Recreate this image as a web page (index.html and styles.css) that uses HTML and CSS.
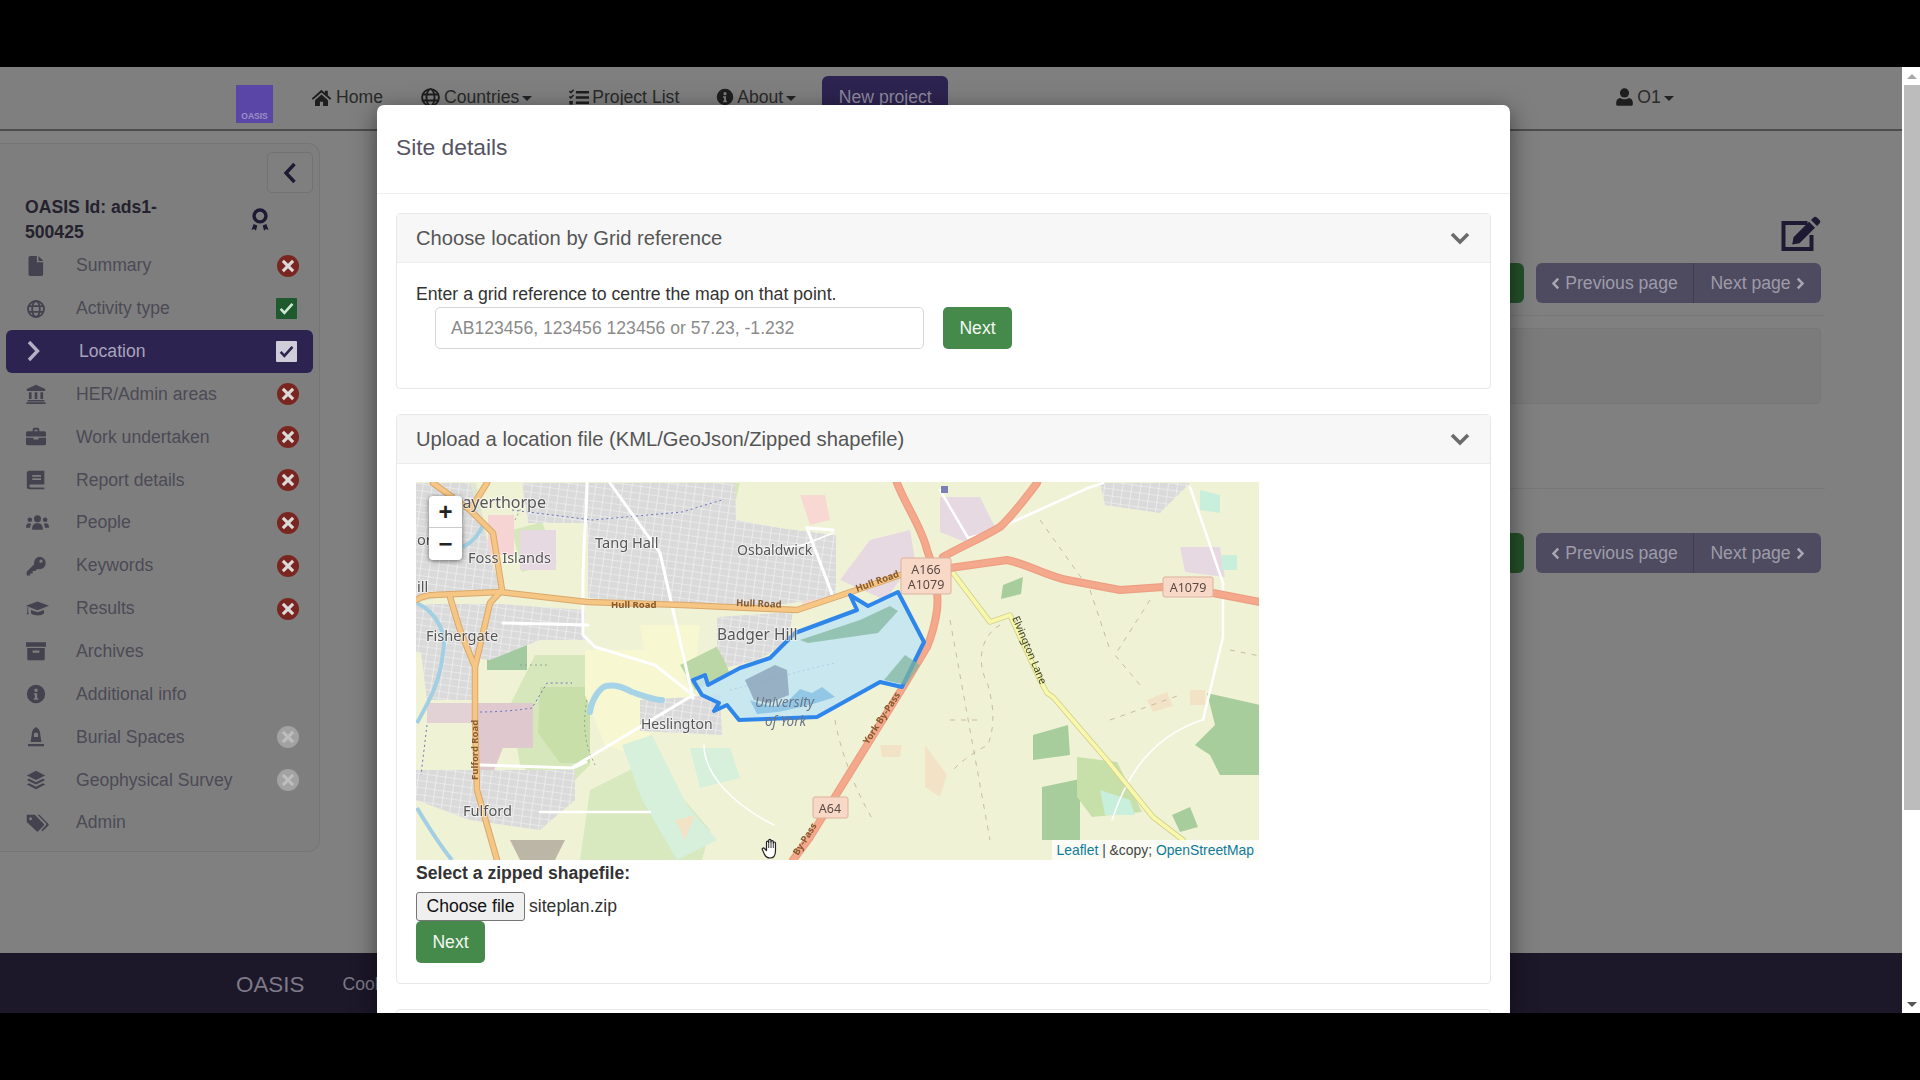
FILE: index.html
```html
<!DOCTYPE html>
<html lang="en">
<head>
<meta charset="utf-8">
<title>OASIS - Site details</title>
<link rel="stylesheet" href="styles.css">
</head>
<body>
<svg class="sprite" aria-hidden="true">
  <defs>
    <symbol id="i-home" viewBox="0 0 24 24"><path d="M12 3.2 .8 13l1.4 1.7L12 6.2l9.8 8.5 1.4-1.7-4-3.5V4.2h-3.4v2.6zM4.6 15v6.8h5.6v-5h3.6v5h5.6V15L12 8.6z"/></symbol>
    <symbol id="i-globe" viewBox="0 0 24 24"><g fill="none" stroke="currentColor" stroke-width="2.2"><circle cx="12" cy="12" r="9.6"/><ellipse cx="12" cy="12" rx="4.6" ry="9.6"/><path d="M2.4 8.6h19.2M2.4 15.4h19.2"/></g></symbol>
    <symbol id="i-list" viewBox="0 0 24 24"><path d="M9 4.5h15v3H9zM9 10.5h15v3H9zM9 16.5h15v3H9zM1 5.5 2.4 4 3.4 5 5.8 2.600 7 3.800 3.400 7.600zM1 11.500l1.400-1.500 1 1 2.400-2.400L7 9.800l-3.600 3.800zM1.500 16h4v4h-4z"/></symbol>
    <symbol id="i-info" viewBox="0 0 24 24"><path fill-rule="evenodd" d="M12 1a11 11 0 1 0 0 22 11 11 0 0 0 0-22zm0 4.400a2.100 2.100 0 1 1 0 4.200 2.100 2.100 0 0 1 0-4.200zM9.400 11h4v6h1.300v2H9.400v-2h1.300v-4H9.400z"/></symbol>
    <symbol id="i-user" viewBox="0 0 24 24"><circle cx="12" cy="6.800" r="5.800"/><path d="M6.500 13.200c1.500 1 3.500 1.600 5.500 1.600s4-.6 5.500-1.600c3 .4 5 2.800 5 6v1.800a2 2 0 0 1-2 2h-17a2 2 0 0 1-2-2v-1.800c0-3.200 2-5.600 5-6z"/></symbol>
    <symbol id="i-file" viewBox="0 0 18 24"><path d="M2 0h8v7.500h7.500V22a2 2 0 0 1-2 2H2a2 2 0 0 1-2-2V2a2 2 0 0 1 2-2zM12 0l6 6h-6z"/></symbol>
    <symbol id="i-bank" viewBox="0 0 24 24"><path d="M12 1 1 6v2.400h22V6zM3.500 10h3.200v8H3.500zM10.400 10h3.200v8h-3.200zM17.300 10h3.200v8h-3.200zM2 19.200h20V21H2zM.6 21.800h22.800V24H.6z"/></symbol>
    <symbol id="i-case" viewBox="0 0 24 24"><path d="M8 5V3a2 2 0 0 1 2-2h4a2 2 0 0 1 2 2v2h6a2 2 0 0 1 2 2v4.500H0V7a2 2 0 0 1 2-2zm2.200 0h3.600V3.200h-3.600zM0 13h9v2h6v-2h9v7a2 2 0 0 1-2 2H2a2 2 0 0 1-2-2z"/></symbol>
    <symbol id="i-book" viewBox="0 0 24 24"><path fill-rule="evenodd" d="M4 1h18v16.500H5a2 2 0 0 0 0 3.500h17v2H4a3 3 0 0 1-3-3V4a3 3 0 0 1 3-3zm3.500 5v2H18V6zm0 4v2H18v-2z"/></symbol>
    <symbol id="i-users" viewBox="0 0 30 24"><circle cx="15" cy="7" r="4.600"/><circle cx="5" cy="8.500" r="3"/><circle cx="25" cy="8.500" r="3"/><path d="M8 20c0-4.500 2.500-7 7-7s7 2.500 7 7v1.500H8zM0 18c0-3 1.500-5 4-5 1.200 0 2 .4 2.800 1-1 1.400-1.400 3-1.400 5H0zM30 18c0-3-1.500-5-4-5-1.200 0-2 .4-2.800 1 1 1.400 1.400 3 1.400 5H30z"/></symbol>
    <symbol id="i-key" viewBox="0 0 24 24"><path fill-rule="evenodd" d="M16 1a7.500 7.500 0 1 1-2.600 14.500L11 18H8v3H5v2.500H.8V19l9-9A7.500 7.500 0 0 1 16 1zm2 3.200a2 2 0 1 0 0 4 2 2 0 0 0 0-4z"/></symbol>
    <symbol id="i-cap" viewBox="0 0 30 24"><path d="M15 3 0 8.500l15 5.800 15-5.800zM6.500 13.800v3.700c0 1.800 4 3.500 8.500 3.500s8.500-1.700 8.500-3.500v-3.700L15 17zM1.800 10v6.500l-1 3h3l-1-3v-6z"/></symbol>
    <symbol id="i-archive" viewBox="0 0 24 24"><path fill-rule="evenodd" d="M0 1.500h24v5.500H0zM1.500 8.500h21V22a1 1 0 0 1-1 1h-19a1 1 0 0 1-1-1zm6.500 3v2.500h8v-2.500z"/></symbol>
    <symbol id="i-burial" viewBox="0 0 24 24"><path fill-rule="evenodd" d="M12 0c3 2 4.500 4 4.800 7l1.700 11H5.500L7.200 7C7.500 4 9 2 12 0zm0 6.500a2.500 2.500 0 0 0-2.500 2.500v3h5V9A2.500 2.500 0 0 0 12 6.500zM2.500 20.500h19V23h-19z"/></symbol>
    <symbol id="i-layers" viewBox="0 0 24 24"><path d="M12 1 1 6.500 12 12l11-5.500zM3.800 10.500 1 12l11 5.500L23 12l-2.800-1.500L12 14.600zM3.800 16 1 17.500 12 23l11-5.500-2.800-1.500L12 20.100z"/></symbol>
    <symbol id="i-tags" viewBox="0 0 30 24"><path fill-rule="evenodd" d="M1 2h10.500L23 13.500a2 2 0 0 1 0 2.800L16.300 23a2 2 0 0 1-2.800 0L1 11.500zM6 5a2 2 0 1 0 0 4 2 2 0 0 0 0-4z"/><path d="M15 2h2.500L29 13.500a2 2 0 0 1 0 2.800L21.500 23.500 20 22l6-6.500a2 2 0 0 0 0-2.500z"/></symbol>
    <symbol id="i-award" viewBox="0 0 20 26"><path fill-rule="evenodd" d="M10 0a8.500 8.500 0 1 1 0 17 8.500 8.500 0 0 1 0-17zm0 3.800a4.700 4.700 0 1 0 0 9.400 4.700 4.700 0 0 0 0-9.400z"/><path d="M3 17.500 7 19l-1.500 6L3.500 23 .5 24zM17 17.500 13 19l1.500 6 2-2 3 1z"/></symbol>
    <symbol id="i-edit" viewBox="0 0 40 36"><path fill="none" stroke="currentColor" stroke-width="4" d="M27 8H3v26h28V20"/><path d="M33 2.500a2.500 2.500 0 0 1 3.400 0l2.600 2.600a2.500 2.500 0 0 1 0 3.400l-2.500 2.500-6-6zM28.500 6.800l6 6-15.500 15.400-7.300 1.300 1.300-7.300z"/></symbol>
    <symbol id="i-x" viewBox="0 0 24 24"><circle cx="12" cy="12" r="12" fill="currentColor"/><path d="M7.600 5.200 5.200 7.600 9.600 12l-4.400 4.400 2.400 2.400 4.400-4.400 4.400 4.400 2.400-2.400-4.400-4.400 4.400-4.400-2.400-2.400L12 9.600z"/></symbol>
    <symbol id="i-check" viewBox="0 0 22 24"><path d="M4.300 12.500 8.600 17 17.800 6.800" fill="none" stroke="currentColor" stroke-width="3"/></symbol>
    <symbol id="i-left" viewBox="0 0 10 14"><path d="M8 1.500 2.800 7 8 12.500" fill="none" stroke="currentColor" stroke-width="2.800"/></symbol>
    <symbol id="i-right" viewBox="0 0 10 14"><path d="M2 1.500 7.200 7 2 12.500" fill="none" stroke="currentColor" stroke-width="2.800"/></symbol>
    <symbol id="i-hand" viewBox="0 0 20 22"><path fill="#fff" stroke="#222" stroke-width="1.200" stroke-linejoin="round" d="M5.500 12.500V4.300c0-1.600 2.200-1.600 2.200 0V2.600c0-1.700 2.300-1.700 2.300 0v1.200c0-1.600 2.300-1.600 2.300 0v1.300c0-1.500 2.200-1.500 2.200 0v7.300c0 4.300-1.500 7.600-5.500 7.600-3 0-4.300-1.300-5.500-3.600L1.400 11.800c-.7-1.400 1-2.500 2-1.300z"/><path stroke="#222" stroke-width=".9" d="M7.700 4v6M10 3.600V10M12.300 4.500V10"/></symbol>
  </defs>
</svg>

<div class="letterbox"></div>
<div class="viewport">
  <div class="page">
    <nav class="navbar">
      <a class="brand"><span>OASIS</span></a>
      <a class="nav-link home"><svg class="ic"><use href="#i-home"/></svg>Home</a>
      <a class="nav-link countries"><svg class="ic"><use href="#i-globe"/></svg>Countries<i class="caret"></i></a>
      <a class="nav-link projects"><svg class="ic"><use href="#i-list"/></svg>Project List</a>
      <a class="nav-link about"><svg class="ic"><use href="#i-info"/></svg>About<i class="caret"></i></a>
      <a class="new-project">New project</a>
      <a class="nav-link user"><svg class="ic"><use href="#i-user"/></svg>O1<i class="caret"></i></a>
    </nav>

    <main class="main">
      <aside class="sidebar">
        <button class="collapse"><svg viewBox="0 0 14 22"><path d="M11.500 2 3 11l8.500 9" fill="none" stroke="currentColor" stroke-width="3.400"/></svg></button>
        <div class="oasis-id">
          <b>OASIS Id: ads1-<br>500425</b>
          <svg class="award"><use href="#i-award"/></svg>
        </div>
        <ul class="menu">
          <li><svg class="mi"><use href="#i-file"/></svg><span>Summary</span><svg class="st x"><use href="#i-x"/></svg></li>
          <li><svg class="mi"><use href="#i-globe"/></svg><span>Activity type</span><i class="box ok"><svg><use href="#i-check"/></svg></i></li>
          <li class="active"><svg class="mi" viewBox="0 0 14 22"><path d="M3 2l8.500 9L3 20" fill="none" stroke="currentColor" stroke-width="3.400"/></svg><span>Location</span><i class="box light"><svg><use href="#i-check"/></svg></i></li>
          <li><svg class="mi"><use href="#i-bank"/></svg><span>HER/Admin areas</span><svg class="st x"><use href="#i-x"/></svg></li>
          <li><svg class="mi"><use href="#i-case"/></svg><span>Work undertaken</span><svg class="st x"><use href="#i-x"/></svg></li>
          <li><svg class="mi"><use href="#i-book"/></svg><span>Report details</span><svg class="st x"><use href="#i-x"/></svg></li>
          <li><svg class="mi wide"><use href="#i-users"/></svg><span>People</span><svg class="st x"><use href="#i-x"/></svg></li>
          <li><svg class="mi"><use href="#i-key"/></svg><span>Keywords</span><svg class="st x"><use href="#i-x"/></svg></li>
          <li><svg class="mi wide"><use href="#i-cap"/></svg><span>Results</span><svg class="st x"><use href="#i-x"/></svg></li>
          <li><svg class="mi"><use href="#i-archive"/></svg><span>Archives</span></li>
          <li><svg class="mi"><use href="#i-info"/></svg><span>Additional info</span></li>
          <li><svg class="mi"><use href="#i-burial"/></svg><span>Burial Spaces</span><svg class="st off"><use href="#i-x"/></svg></li>
          <li><svg class="mi"><use href="#i-layers"/></svg><span>Geophysical Survey</span><svg class="st off"><use href="#i-x"/></svg></li>
          <li><svg class="mi wide"><use href="#i-tags"/></svg><span>Admin</span></li>
        </ul>
      </aside>

      <section class="content">
        <svg class="edit"><use href="#i-edit"/></svg>
        <div class="pager first">
          <span class="save"></span>
          <div class="group"><a><svg class="pg"><use href="#i-left"/></svg>Previous page</a><a>Next page<svg class="pg"><use href="#i-right"/></svg></a></div>
        </div>
        <hr class="rule">
        <div class="well"></div>
        <hr class="rule lower">
        <div class="pager">
          <span class="save"></span>
          <div class="group"><a><svg class="pg"><use href="#i-left"/></svg>Previous page</a><a>Next page<svg class="pg"><use href="#i-right"/></svg></a></div>
        </div>
      </section>
    </main>

    <footer class="footer"><span class="f-brand">OASIS</span><span class="f-link">Cookies</span></footer>
  </div>

  <div class="scrollbar">
    <i class="arrow up"></i>
    <div class="thumb"></div>
    <i class="arrow down"></i>
  </div>

  <div class="modal">
    <header class="modal-head"><h5>Site details</h5></header>
    <div class="modal-body">
      <section class="panel grid-panel">
        <div class="panel-head">Choose location by Grid reference<svg class="chev" viewBox="0 0 20 14"><path d="M2 3l8 8 8-8" fill="none" stroke="currentColor" stroke-width="3.600"/></svg></div>
        <div class="panel-body">
          <p class="help">Enter a grid reference to centre the map on that point.</p>
          <div class="grid-row">
            <input class="field" type="text" placeholder="AB123456, 123456 123456 or 57.23, -1.232">
            <button class="btn-next">Next</button>
          </div>
        </div>
      </section>

      <section class="panel">
        <div class="panel-head">Upload a location file (KML/GeoJson/Zipped shapefile)<svg class="chev" viewBox="0 0 20 14"><path d="M2 3l8 8 8-8" fill="none" stroke="currentColor" stroke-width="3.600"/></svg></div>
        <div class="panel-body upload">
          <div class="map">
            <svg class="tiles" viewBox="416 482 843 378" preserveAspectRatio="none">
              <defs>
                <pattern id="streets" width="9" height="7" patternUnits="userSpaceOnUse" patternTransform="rotate(8)">
                  <rect width="9" height="7" fill="#dadada"/>
                  <path d="M0 0h9M0 0v7" stroke="#f6f6f6" stroke-width="1.200"/>
                </pattern>
              </defs>
              <rect x="416" y="482" width="843" height="378" fill="#f0f2d6"/>

              <!-- land use -->
              <path fill="#dfe6d2" d="M416 483h60l20 100-80 20z"/>
              <path fill="#d6e7bc" d="M600 483h140l-10 40-130 10zM535 655h55v110l-30 30-40-30-10-60zM512 530l30-8 15 40-35 10z"/>
              <path fill="#c9dfa9" d="M540 687h50v76h-30l-22-30z"/>
              <path fill="#d8e8bf" d="M590 790l60-30 60 70-8 30H580z"/>
              <path fill="#f7f7d2" d="M585 650h80l30 45-30 20-30 40-30-10-20-50z"/>
              <path fill="#f7f7d2" d="M640 625h60l-5 50-45 10z"/>
              <path fill="#d6f0dc" d="M622 745l30-10 35 70 30 35-40 20-35-60zM690 748h40l10 30-40 10z"/>
              <path fill="#e2d2d6" d="M427 703h60v20h-60z"/>
              <path fill="#dfc9cf" d="M478 703h55v45h-30l-10 25h-15z"/>
              <path fill="#f6d4d4" d="M488 515h26v40h-26z"/>
              <path fill="#e6d9e2" d="M520 530h36v40h-36zM840 580l30-40 40-10 5 30-30 40zM940 497h40l15 30-30 15-25-10zM1180 547h40l5 30-40-5z"/>
              <path fill="#f8d8d2" d="M800 495h25l5 25-20 5zM802 590l28-10 2 20-30 6z"/>
              <path fill="#bcd7a6" d="M680 665l40-20 10 30-35 15z"/>
              <path fill="#a3c9a0" d="M487 640h40v30h-40z"/>
              <path fill="#a8cd9c" d="M1207 693l53 12v70h-40l-10-20-15-10 20-20zM1042 787l38-8v61h-38zM1033 735l35-10 2 30-37 5zM1003 585l20-8-2 17-20 5zM1172 815l18-8 8 20-18 5z"/>
              <path fill="#c7dfa9" d="M1077 757l40 5 25 50-50 5-15-20z"/>
              <path fill="#c8eedc" d="M1100 790l30 10 5 15-30 0zM1200 490l20 5v18l-20-3zM1222 555h15v15h-15z"/>
              <path fill="#f2e3c6" d="M925 745l22 30-7 22-15-10zM1147 700l20-8 6 14-20 6zM1190 690h15v15h-15zM880 745h22l-2 12h-18zM695 815l-20 5 10 20z"/>
              <path fill="#bcb6a6" d="M510 840h55l-10 20h-35z"/>

              <!-- built-up -->
              <path fill="url(#streets)" d="M588 483h147l1 37 44 8 56 7v61l-76 12-172-10zM416 604h84l85 6v30h-45l-50 20-74-8zM421 652h54v48h-48zM416 770h159v30l-35 30-70-10-54-20zM717 617l76-5-5 30-30 18-30 7-11-20zM640 700l80-5 2 40-82-4zM1100 483h90l-30 30-55-8zM416 483h54l30 105-84 10zM522 483h66v40h-60z"/>

              <!-- water -->
              <path fill="none" stroke="#a2cfe2" stroke-width="4" d="M417 603c20 10 30 30 26 50-3 30-15 50-26 70M417 808c12 20 25 40 35 52M483 525c-5 12-12 18-20 22"/>
              <path fill="none" stroke="#a6d3e6" stroke-width="6" stroke-linecap="round" d="M590 712c2-14 10-24 16-26 10-2 18 2 26 6 12 4 22 8 30 8"/>
              <path fill="none" stroke="#8aa894" stroke-width="1" stroke-dasharray="2 3" d="M587 700c-5 25-2 45 8 65M520 665h30M515 520l10-20"/>
              <path fill="none" stroke="#6a74c0" stroke-width="1" stroke-dasharray="2 3" d="M512 510l80 10 90-8 40-12M427 725l-6 50M480 712c20 0 40-2 52-4l15-25h25M730 690c40-10 80-22 105-27"/>

              <!-- minor roads -->
              <g fill="none" stroke="#fff" stroke-linecap="round">
                <path stroke-width="3" d="M587 483c0 30-5 70-4 120v32l12 12 60 18 38 30-120 72M480 765l93 3 13-6M610 483l50 70 33 145M503 623l85 2M833 530l-26-2 25 66"/>
                <path stroke-width="2.500" d="M650 812H540M1190 487l33 96v54l-20 83M940 490l28 48 20-5 100-45 15-5"/>
                <path stroke-width="1.500" d="M833 533l-30 12-40 5M704 745c0 30 30 60 70 80M1202 720c-60 20-80 70-90 100"/>
              </g>
              <g fill="none" stroke="#c8bca2" stroke-width="1" stroke-dasharray="5 6">
                <path d="M835 720c5 30 20 70 38 100M950 620l40 220M1000 625c-18 10-25 35-12 60 8 30 5 45 0 60-20 10-30 20-35 25M1090 590l20 60M1150 600l-35 55 25 30M1230 650l30 6M1110 720l70-25M950 720l30 0M1040 520l50 70"/>
              </g>

              <!-- main roads -->
              <g fill="none" stroke="#d9a86d" stroke-width="6.500" stroke-linecap="round" stroke-linejoin="round">
                <path d="M416 600c5-3 10-5 17-5l67-3 87 10 96 3 114 5 36-12 47-16 20-7"/>
                <path d="M433 483l37 27 23 23 9 57-12 13-15 64v53l2 70 20 70M487 483l-17 27M450 597l10 33 15 37"/>
              </g>
              <g fill="none" stroke="#f6c684" stroke-width="4.500" stroke-linecap="round" stroke-linejoin="round">
                <path d="M416 600c5-3 10-5 17-5l67-3 87 10 96 3 114 5 36-12 47-16 20-7"/>
                <path d="M433 483l37 27 23 23 9 57-12 13-15 64v53l2 70 20 70M487 483l-17 27M450 597l10 33 15 37"/>
              </g>
              <g fill="none" stroke-linecap="round" stroke-linejoin="round">
                <path stroke="#cfd08e" stroke-width="5.500" d="M953 573l37 49 20-7 30 65 7 13 6 4 54 63 46 57 30 23"/>
                <path stroke="#f8f7ab" stroke-width="3.800" d="M953 573l37 49 20-7 30 65 7 13 6 4 54 63 46 57 30 23"/>
                <path stroke="#ee9f83" stroke-width="8" d="M897 483c10 25 25 45 30 67 8 20 12 40 10 60-2 15-5 25-10 37l-24 40-70 113-23 37-17 23M1037 483c-15 20-25 33-37 44-20 12-40 20-57 30M950 568l57-8c20 4 40 16 60 20l53 10 43-3 50 6 47 9"/>
                <path stroke="#f4a98d" stroke-width="5.500" d="M897 483c10 25 25 45 30 67 8 20 12 40 10 60-2 15-5 25-10 37l-24 40-70 113-23 37-17 23M1037 483c-15 20-25 33-37 44-20 12-40 20-57 30M950 568l57-8c20 4 40 16 60 20l53 10 43-3 50 6 47 9"/>
              </g>
              <rect x="941" y="486" width="7" height="7" fill="#7c80b4"/>

              <!-- site outline -->
              <path fill="#bfe4f4" fill-opacity=".8" stroke="#2f86ea" stroke-width="4" stroke-linejoin="round" d="M693 680l12-5 3 10 32-17 30-10 20-20 5-5 62-23-7-15 18 11 30-14 26 50-22 45-22-5-63 35-78 3-12-15-13 6 5-8-17-8z"/>
              <path fill="#8ba3b8" fill-opacity=".8" d="M745 680l30-15 12 5 2 25-20 8-15-3z"/>
              <path fill="#86bfe4" fill-opacity=".8" d="M750 700c20 8 30 8 40-1l10-10 12 4 10-6 13 10c-14 5-40 12-58 15l-20 2z"/>
              <path fill="#7fb49a" fill-opacity=".7" d="M800 640l60-20 30-14 8 5-20 22-70 10zM905 655l15 10-14 20-22-5z"/>

              <!-- labels -->
              <g class="place">
                <text x="454" y="508" class="xl">Layerthorpe</text>
                <text x="595" y="548">Tang Hall</text>
                <text x="468" y="563">Foss Islands</text>
                <text x="737" y="555" class="sm">Osbaldwick</text>
                <text x="426" y="641">Fishergate</text>
                <text x="717" y="640" class="lg">Badger Hill</text>
                <text x="641" y="729" class="sm">Heslington</text>
                <text x="463" y="816">Fulford</text>
                <text x="417" y="545">or</text>
                <text x="417" y="592">ill</text>
              </g>
              <g class="uni">
                <text x="755" y="707">University</text>
                <text x="765" y="726">of York</text>
              </g>
              <g class="roadname">
                <text x="611" y="608">Hull Road</text>
                <text x="736" y="606" transform="rotate(2 736 606)">Hull Road</text>
                <text x="857" y="592" transform="rotate(-20 857 592)">Hull Road</text>
                <text x="478" y="780" transform="rotate(-90 478 780)">Fulford Road</text>
                <text x="868" y="745" transform="rotate(-57 868 745)">York By-Pass</text>
                <text x="798" y="856" transform="rotate(-58 798 856)">By-Pass</text>
              </g>
              <text class="lane" x="1012" y="618" transform="rotate(67 1012 618)">Elvington Lane</text>
              <g class="shield">
                <rect x="901" y="558" width="50" height="36" rx="2"/>
                <rect x="1163" y="577" width="50" height="20" rx="2"/>
                <rect x="813" y="797" width="35" height="21" rx="2"/>
                <text x="926" y="574">A166</text>
                <text x="926" y="589">A1079</text>
                <text x="1188" y="592">A1079</text>
                <text x="830" y="813">A64</text>
              </g>
            </svg>
            <div class="zoom"><a>+</a><a>&minus;</a></div>
            <div class="attrib"><a>Leaflet</a> | &amp;copy; <a>OpenStreetMap</a></div>
            <svg class="hand"><use href="#i-hand"/></svg>
          </div>
          <label class="file-label">Select a zipped shapefile:</label>
          <div class="file-row"><button class="file-btn">Choose file</button><span>siteplan.zip</span></div>
          <button class="btn-next">Next</button>
        </div>
      </section>

      <section class="panel stub"></section>
    </div>
  </div>
</div>
<div class="letterbox"></div>
</body>
</html>
```
FILE: styles.css
```css
* { box-sizing: border-box; }
html, body { margin: 0; height: 100%; overflow: hidden; background: #000; }
body { font-family: "Liberation Sans", Arial, sans-serif; font-size: 17.6px; color: #333; }
.sprite { display: none; }
.letterbox { height: 67px; background: #000; }

.viewport { position: relative; height: 946px; display: flex; overflow: hidden; }
.page { flex: 1; min-width: 0; display: flex; flex-direction: column; background: #808080; }

/* top navigation */
.navbar { height: 64px; flex: none; display: flex; align-items: flex-start; padding-left: 236px; border-bottom: 2px solid #4c4c4c; background: #7f7f7f; color: #262626; }
.brand { width: 37px; height: 38px; margin-top: 18px; background: #5a46a6; display: flex; align-items: flex-end; justify-content: center; }
.brand span { font-size: 8.5px; font-weight: 700; color: #9c90c8; padding-bottom: 2px; }
.nav-link { display: flex; align-items: center; height: 20px; margin-top: 20px; font-size: 17.6px; color: #2a2a2a; white-space: nowrap; }
.nav-link .ic { width: 21px; height: 21px; margin-right: 3px; fill: currentColor; color: #1e1e1e; }
.home { margin-left: 38px; }
.home .ic { margin-right: 4px; }
.countries { margin-left: 37px; }
.projects { margin-left: 36px; }
.about { margin-left: 37px; }
.about .ic { width: 18px; height: 18px; }
.caret { display: inline-block; margin-left: 3px; margin-top: 3px; border: 5px solid transparent; border-top-color: #222; border-bottom: 0; }
.new-project { margin: 9px 0 0 26px; width: 126px; height: 50px; padding-top: 11px; text-align: center; background: #2d2350; color: #8f8a9f; border-radius: 6px 6px 0 0; }
.user { margin-left: 667px; }
.user .ic { width: 19px; height: 20px; }

/* main */
.main { flex: 1; min-height: 0; display: flex; }
.sidebar { flex: none; width: 320px; height: 709px; margin-top: 12px; padding: 8px 6px 0 6px; background: #7e7e7e; border: 1px solid #757575; border-left: 0; border-radius: 0 12px 12px 0; position: relative; }
.collapse { display: flex; align-items: center; justify-content: center; margin-left: auto; width: 46px; height: 41px; background: #7f7f7f; border: 1px solid #727272; border-radius: 5px; padding: 0; color: #1f1a33; }
.collapse svg { width: 14px; height: 22px; }
.oasis-id { display: flex; align-items: center; margin: 2px 0 0 19px; height: 49.300px; line-height: 24.500px; color: #25222e; font-size: 17.6px; }
.oasis-id b { width: 222px; }
.award { width: 18px; height: 26px; fill: #1f1a33; margin-left: 4px; }
.menu { list-style: none; margin: 0; padding: 0; }
.menu li { display: flex; align-items: center; height: 42.860px; padding-left: 20px; color: #4c4a55; }
.menu li span { flex: 1; margin-left: 30px; }
.mi { width: 20px; height: 20px; flex: none; fill: #45424f; color: #45424f; }
.mi.wide { width: 23px; height: 19px; margin-right: -3px; }
.st { width: 22px; height: 22px; margin-right: 14px; flex: none; }
.st.x { color: #7a2620; fill: #dcdada; }
.st.off { color: #a2a2a2; fill: #bdbdbd; }
.box { width: 21px; height: 21px; margin-right: 16px; display: block; border-radius: 1px; flex: none; }
.box svg { width: 21px; height: 21px; display: block; }
.box.ok { background: #1e5a2e; color: #cfe7d4; }
.box.light { background: #cfcdd8; color: #2d2350; }
.menu li.active { background: #2d2350; color: #a8a3bb; border-radius: 6px; }
.menu li.active .mi { width: 14px; height: 22px; color: #b4afc4; }
.menu li.active span { margin-left: 39px; }

/* content behind the modal */
.content { flex: 1; min-width: 0; display: flex; flex-direction: column; align-items: flex-end; padding: 84px 81px 0 100px; }
.edit { width: 41px; height: 36px; fill: #1f1a33; color: #1f1a33; margin-bottom: 12px; }
.pager { display: flex; gap: 12px; height: 40px; }
.save { width: 100px; background: #255029; border-radius: 0 6px 6px 0; }
.group { display: flex; background: #4e4b60; border-radius: 6px; color: #9d9ba9; }
.group a { display: flex; align-items: center; justify-content: center; gap: 5px; height: 100%; white-space: nowrap; }
.group a:first-child { width: 158px; border-right: 1px solid #403d50; }
.group a:last-child { width: 127px; }
.pg { width: 9px; height: 13px; color: #a9a7b4; }
.rule { align-self: stretch; border: 0; border-top: 1px solid #777; margin: 12px -4px 12px 0; }
.well { align-self: stretch; height: 76px; background: #7b7b7b; border: 1px solid #777; border-radius: 5px; }
.rule.lower { margin: 84px -4px 44px 0; }

.footer { height: 60px; flex: none; display: flex; align-items: center; padding: 3px 0 0 236px; background: #1c1729; color: #7d7a88; }
.f-brand { font-size: 22.400px; }
.f-link { margin-left: 38px; font-size: 17.6px; }

.scrollbar { width: 18px; flex: none; background: #fff; display: flex; flex-direction: column; align-items: center; border-left: 2px solid #fff; }
.thumb { width: 100%; height: 725px; background: #bcbcbc; }
.arrow { border: 5px solid transparent; margin: 7px 0 6px; }
.arrow.up { border-bottom: 5px solid #a8a8a8; border-top: 0; }
.arrow.down { border-top: 5px solid #555; border-bottom: 0; margin-top: auto; }

/* modal */
.modal { position: absolute; left: 377px; top: 38px; width: 1133px; height: 908px; background: #fff; border-radius: 7px 7px 0 0; box-shadow: 0 6px 24px rgba(0,0,0,.5); overflow: hidden; }
.modal-head { height: 89px; display: flex; align-items: center; padding: 0 19px; border-bottom: 1px solid #eee; }
.modal-head h5 { margin: 0; font-size: 22.800px; font-weight: 400; color: #565465; position: relative; top: -2px; }
.modal-body { padding: 19px; }
.panel { background: #fff; border: 1px solid #e8e8e8; border-radius: 4px; margin-bottom: 25px; }
.panel-head { height: 49px; display: flex; align-items: center; justify-content: space-between; padding: 0 20px 0 19px; background: #f7f7f7; border-bottom: 1px solid #ececec; font-size: 20.200px; color: #555; }
.chev { width: 20px; height: 14px; color: #6b6b6b; }
.panel-body { padding: 21px 19px 0; }
.grid-panel { height: 176px; }
.help { margin: 0; line-height: 20px; color: #333; font-size: 17.680px; }
.grid-row { display: flex; gap: 19px; margin: 3px 0 0 19px; }
.field { width: 489px; height: 42px; padding: 0 15px; font: 17.6px "Liberation Sans", Arial, sans-serif; color: #333; border: 1px solid #d6d6d6; border-radius: 5px; outline: 0; }
.field::placeholder { color: #8b8b8b; opacity: 1; }
.btn-next { width: 69px; height: 42px; padding: 0; background: #468a4b; color: #f2f7f2; font: 17.6px "Liberation Sans", Arial, sans-serif; border: 0; border-radius: 5px; }
.upload { padding-bottom: 20px; }
.upload.panel-body { padding-top: 18px; }

.map { position: relative; width: 843px; height: 378px; overflow: hidden; }
.tiles { width: 843px; height: 378px; display: block; filter: blur(.45px); }
.tiles text { font-family: "Noto Sans", "Open Sans", sans-serif; }
.place text { font-size: 14.600px; fill: #555; stroke: #fff; stroke-width: 2px; stroke-opacity: .55; paint-order: stroke; }
.place .sm { font-size: 14px; }
.place .xl { font-size: 16px; }
.place .lg { font-size: 15.500px; }
.uni text { font-size: 13.500px; font-style: italic; fill: #6b7585; }
.roadname text { font-size: 9.500px; font-weight: 700; fill: #875a2d; }
.lane { font-size: 10.500px; fill: #3c4220; }
.shield rect { fill: #f8d9c8; stroke: #dcb19b; stroke-width: 1; }
.shield text { font-size: 12.500px; fill: #5a4a44; text-anchor: middle; }
.zoom { position: absolute; left: 13px; top: 14px; width: 33px; border-radius: 4px; background: #fff; box-shadow: 0 1px 5px rgba(0,0,0,.55); }
.zoom a { display: block; height: 32px; text-align: center; font: 700 24px/31px "Liberation Sans", Arial, sans-serif; color: #222; }
.zoom a:first-child { border-bottom: 1px solid #ccc; }
.attrib { position: absolute; right: 0; bottom: 0; height: 20px; padding: 0 5px; line-height: 20px; font-size: 13.900px; color: #444; background: rgba(255,255,255,.75); }
.attrib a { color: #0f7a9a; }
.hand { position: absolute; left: 345px; top: 356px; width: 20px; height: 22px; }

.file-label { display: block; margin-top: 1px; height: 31px; line-height: 24px; font-weight: 700; font-size: 17.6px; color: #333; }
.file-row { display: flex; align-items: center; height: 29px; }
.file-row span { margin-left: 4px; color: #333; }
.file-btn { width: 109px; height: 29px; padding: 0; background: #efefef; border: 1px solid #767676; border-radius: 3px; font: 17.6px "Liberation Sans", Arial, sans-serif; color: #111; }
.stub { height: 60px; }
```
